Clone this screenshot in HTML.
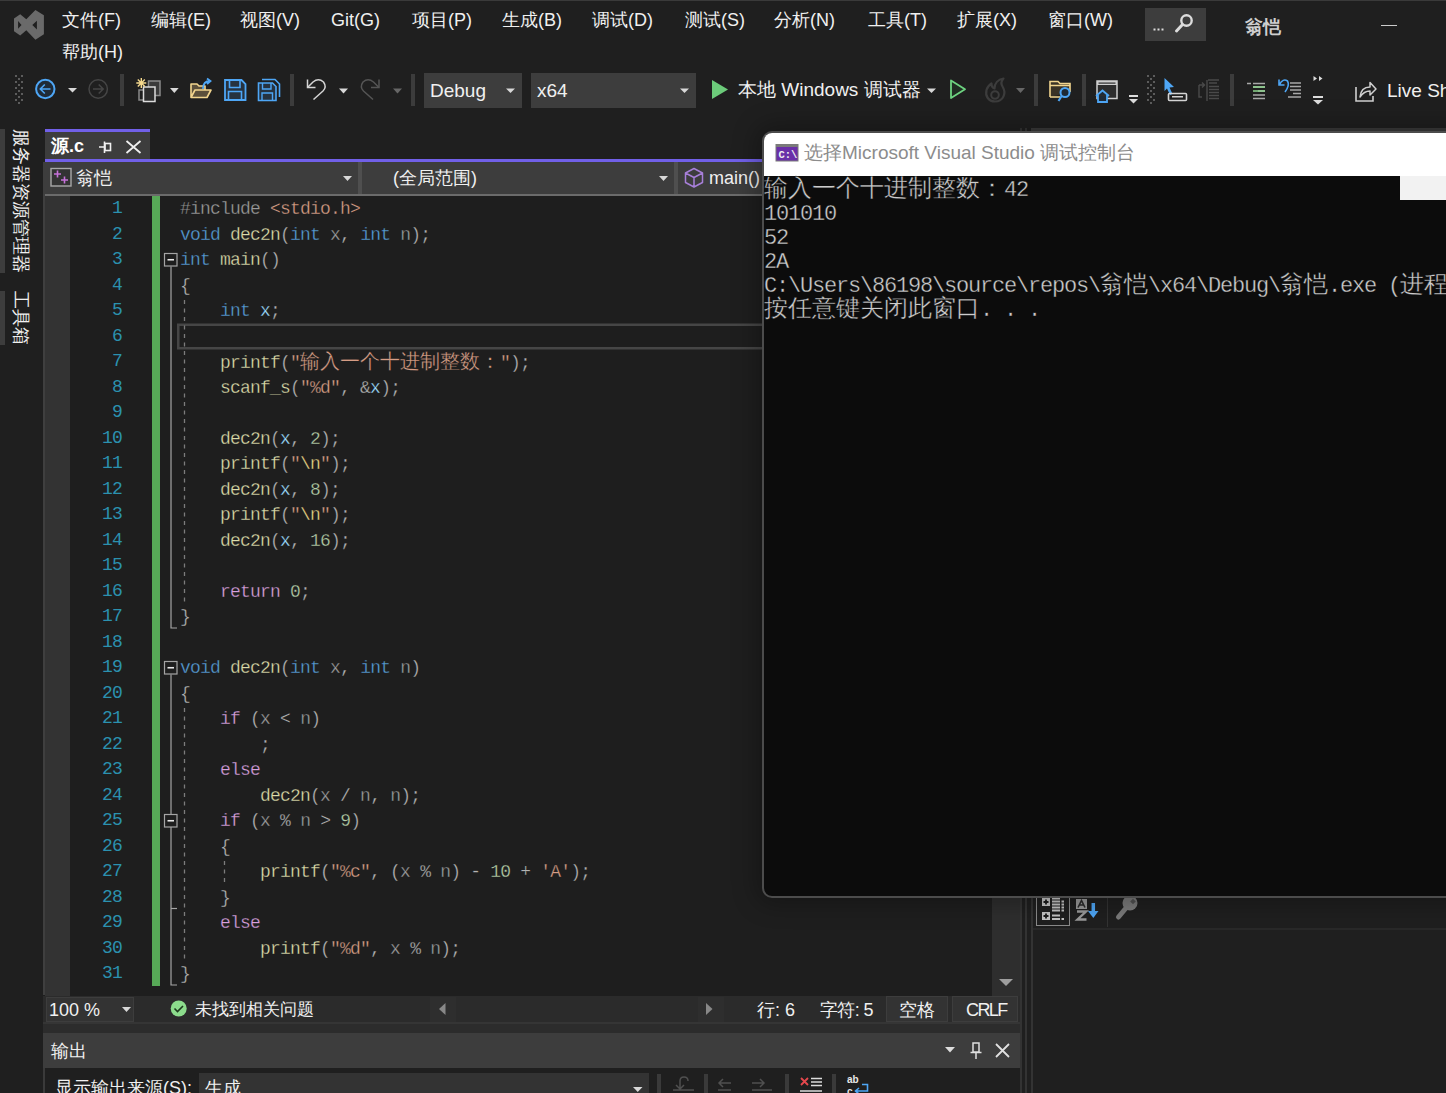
<!DOCTYPE html>
<html><head><meta charset="utf-8">
<style>
*{margin:0;padding:0;box-sizing:border-box}
html,body{width:1446px;height:1093px;overflow:hidden;background:#1f1f1f}
body{position:relative;font-family:"Liberation Sans",sans-serif;color:#f0f0f0}
.a{position:absolute}
.mi{position:absolute;top:8px;font-size:18px;line-height:24px;color:#f0f0f0;white-space:nowrap}
.tb{position:absolute;font-size:19px;line-height:24px;color:#f0f0f0;white-space:nowrap}
.sep{position:absolute;top:74px;width:4px;height:32px;background:#3c3c3c}
.code{position:absolute;left:180px;-webkit-text-stroke:0.28px #1e1e1e;font-family:"Liberation Mono",monospace;font-size:18px;letter-spacing:-0.8px;white-space:pre;color:#dcdcdc;height:25.5px;line-height:25.5px}
.ln{position:absolute;left:69px;width:53px;text-align:right;font-family:"Liberation Mono",monospace;font-size:18px;letter-spacing:-0.8px;color:#2b91af;height:25.5px;line-height:25.5px}
.k{color:#569cd6}.f{color:#dcdcaa}.p{color:#b4b4b4}.pa{color:#9a9a9a}.v{color:#9cdcfe}.s{color:#d69d85}.n{color:#b5cea8}.c{color:#d8a0df}.pp{color:#9b9b9b}.e{color:#e9d585}
.cj{font-size:20px;letter-spacing:0}
.con{position:absolute;left:764px;-webkit-text-stroke:0.35px #0c0c0c;font-size:24px;white-space:pre;color:#cccccc;line-height:24px;height:24px;overflow:visible}
.con m{font-family:"Liberation Mono",monospace;font-size:22px;letter-spacing:-1.2px;position:relative;top:0px}
</style></head><body>
<!-- top window border -->
<div class="a" style="left:0;top:0;width:1446px;height:1px;background:#3a3a3a"></div>

<!-- VS logo -->
<svg class="a" style="left:10px;top:6px" width="40" height="40" viewBox="0 0 40 40">
<path d="M4 12.6 L10.2 8.2 L16.3 13.2 L25.4 4 L33.9 9.2 L33.9 28.2 L25.4 33.8 L16.3 24.2 L10.2 29.5 L4 25.3 Z M8.1 15 L11.5 18.9 L8.1 22.7 Z M26.9 14.8 L22.3 18.9 L26.9 23.4 Z" fill="#6a6a6a" fill-rule="evenodd"/>
</svg>

<!-- menu -->
<div class="mi" style="left:62px">文件(F)</div>
<div class="mi" style="left:151px">编辑(E)</div>
<div class="mi" style="left:240px">视图(V)</div>
<div class="mi" style="left:331px">Git(G)</div>
<div class="mi" style="left:412px">项目(P)</div>
<div class="mi" style="left:502px">生成(B)</div>
<div class="mi" style="left:592px">调试(D)</div>
<div class="mi" style="left:685px">测试(S)</div>
<div class="mi" style="left:774px">分析(N)</div>
<div class="mi" style="left:868px">工具(T)</div>
<div class="mi" style="left:957px">扩展(X)</div>
<div class="mi" style="left:1048px">窗口(W)</div>
<div class="mi" style="left:62px;top:40px">帮助(H)</div>

<!-- search box -->
<div class="a" style="left:1145px;top:8px;width:61px;height:33px;background:#3d3d3d"></div>
<div class="a" style="left:1263px;top:14px;font-size:18px;font-weight:bold;color:#c8c8c8;width:1px"></div>
<div class="a" style="left:1245px;top:15px;font-size:18px;font-weight:bold;color:#cfcfcf;line-height:24px">翁恺</div>
<div class="a" style="left:1381px;top:25px;width:16px;height:1px;background:#cccccc"></div>


<!-- toolbar -->
<div class="sep" style="left:120px"></div>
<div class="sep" style="left:290px"></div>
<div class="sep" style="left:411px"></div>
<div class="sep" style="left:1034px"></div>
<div class="sep" style="left:1082px"></div>
<div class="sep" style="left:1230px"></div>
<div class="a" style="left:424px;top:73px;width:98px;height:35px;background:#3d3d3d"></div>
<div class="a" style="left:531px;top:73px;width:165px;height:35px;background:#3d3d3d"></div>
<div class="tb" style="left:430px;top:79px">Debug</div>
<div class="tb" style="left:537px;top:79px">x64</div>
<div class="tb" style="left:738px;top:78px">本地 Windows 调试器</div>
<div class="tb" style="left:1387px;top:79px">Live Share</div>
<svg class="a" style="left:0;top:0" width="1446" height="120" viewBox="0 0 1446 120">
<g fill="#5c5c5c">
<rect x="15" y="75" width="2" height="2"/><rect x="21" y="75" width="2" height="2"/><rect x="18" y="78" width="2" height="2"/>
<rect x="15" y="81" width="2" height="2"/><rect x="21" y="81" width="2" height="2"/><rect x="18" y="84" width="2" height="2"/>
<rect x="15" y="87" width="2" height="2"/><rect x="21" y="87" width="2" height="2"/><rect x="18" y="90" width="2" height="2"/>
<rect x="15" y="93" width="2" height="2"/><rect x="21" y="93" width="2" height="2"/><rect x="18" y="96" width="2" height="2"/>
<rect x="15" y="99" width="2" height="2"/><rect x="21" y="99" width="2" height="2"/><rect x="18" y="102" width="2" height="2"/>
</g>
<g fill="#5c5c5c">
<rect x="1147" y="75" width="2" height="2"/><rect x="1153" y="75" width="2" height="2"/><rect x="1150" y="78" width="2" height="2"/>
<rect x="1147" y="81" width="2" height="2"/><rect x="1153" y="81" width="2" height="2"/><rect x="1150" y="84" width="2" height="2"/>
<rect x="1147" y="87" width="2" height="2"/><rect x="1153" y="87" width="2" height="2"/><rect x="1150" y="90" width="2" height="2"/>
<rect x="1147" y="93" width="2" height="2"/><rect x="1153" y="93" width="2" height="2"/><rect x="1150" y="96" width="2" height="2"/>
<rect x="1147" y="99" width="2" height="2"/><rect x="1153" y="99" width="2" height="2"/><rect x="1150" y="102" width="2" height="2"/>
</g>
<!-- back -->
<circle cx="45.3" cy="89" r="9.2" fill="#1f2b38" stroke="#4ea6f5" stroke-width="2"/>
<path d="M40.5 89 H50.5 M44.8 84.5 L40.3 89 L44.8 93.5" fill="none" stroke="#4ea6f5" stroke-width="1.6"/>
<path d="M68 88 H77 L72.5 92.5 Z" fill="#d8d8d8"/>
<circle cx="98.2" cy="89" r="9.2" fill="none" stroke="#454545" stroke-width="1.5"/>
<path d="M93 89 H103 M98.7 84.5 L103.2 89 L98.7 93.5" fill="none" stroke="#454545" stroke-width="1.5"/>
<!-- new project -->
<rect x="148.5" y="81" width="11.5" height="14.5" fill="#3a3a3a" stroke="#8a8a8a" stroke-width="1.5"/>
<rect x="139" y="90" width="8" height="10" fill="none" stroke="#8a8a8a" stroke-width="1.5"/>
<rect x="143.5" y="87" width="11.5" height="14.5" fill="#2e2e2e" stroke="#dcdcdc" stroke-width="1.5"/>
<path d="M141.3 78 V88 M136.3 83 H146.3 M137.8 79.5 L144.8 86.5 M144.8 79.5 L137.8 86.5" stroke="#f5d98e" stroke-width="1.4"/>
<path d="M170 88 H178.7 L174.3 93 Z" fill="#d8d8d8"/>
<!-- open folder -->
<path d="M191 97.5 V84 H197 L199 86 H205 V90 M191 97.5 L195 90 H211 L207 97.5 Z" fill="#5c503b" stroke="#f2d58e" stroke-width="1.6" stroke-linejoin="round"/>
<path d="M203 89 Q203 81 210 81 M207 78.5 L210.5 81 L207 84" fill="none" stroke="#4ea6f5" stroke-width="1.8"/>
<!-- save -->
<path d="M225 80 H241.5 L245.5 84 V100 H225 Z" fill="#26323f" stroke="#4ea6f5" stroke-width="1.8"/>
<path d="M229.5 80 V87.5 H240 V80 M228.5 100 V91.5 H241.5 V100" fill="none" stroke="#4ea6f5" stroke-width="1.6"/>
<path d="M262 79.5 H275 L279.5 84 V97" fill="none" stroke="#4ea6f5" stroke-width="1.6"/>
<path d="M258.5 83 H272.5 L276 86.5 V100.5 H258.5 Z" fill="#26323f" stroke="#4ea6f5" stroke-width="1.6"/>
<path d="M262.5 83 V89 H271 V83 M262 100.5 V93 H272.5 V100.5" fill="none" stroke="#4ea6f5" stroke-width="1.4"/>
<!-- undo redo -->
<path d="M307.5 79.5 V87.5 H315.5" fill="none" stroke="#d4d4d4" stroke-width="1.5"/>
<path d="M308 87 L313 82 Q318.5 77.5 323.5 82 Q327 87 323 91 L313.5 99.5" fill="none" stroke="#d4d4d4" stroke-width="1.5"/>
<path d="M339 88.5 H348 L343.5 93.5 Z" fill="#d8d8d8"/>
<path d="M379 79.5 V87.5 H371" fill="none" stroke="#555" stroke-width="1.5"/>
<path d="M378.5 87 L373.5 82 Q368 77.5 363 82 Q359.5 87 363.5 91 L373 99.5" fill="none" stroke="#555" stroke-width="1.5"/>
<path d="M393 88.5 H402 L397.5 93.5 Z" fill="#666"/>
<!-- combos arrows -->
<path d="M506 88.5 H515 L510.5 93 Z" fill="#d8d8d8"/>
<path d="M680 88.5 H689 L684.5 93 Z" fill="#d8d8d8"/>
<!-- play -->
<path d="M712 80 L728 89.5 L712 99 Z" fill="#6ccb7a"/>
<path d="M927 88.5 H936 L931.5 93 Z" fill="#d8d8d8"/>
<path d="M951 80.5 L965 89.3 L951 98 Z" fill="#1f2d22" stroke="#6dd380" stroke-width="1.8" stroke-linejoin="round"/>
<!-- fire -->
<path d="M995 101.5 C988.5 101.5 985 96 986.5 90 C987.5 86.5 990 84.5 991.5 83.5 C991.5 86 992.5 88 994.5 88.5 C994.5 83.5 998 79.5 1003.5 78.5 C1000.5 81.5 1001 84.5 1003 87.5 C1006 92.5 1004 101.5 995 101.5 Z" fill="none" stroke="#3c3c3c" stroke-width="2.2" stroke-linejoin="round"/>
<circle cx="995" cy="95" r="3.8" fill="none" stroke="#3c3c3c" stroke-width="2"/>
<path d="M1016 88 H1025 L1020.5 93 Z" fill="#666"/>
<!-- folder search -->
<path d="M1050 97 V81.5 H1058 L1060 83.5 H1070 V92 M1050 97 H1060 M1050 85.5 H1070" fill="#3a3225" stroke="#f2d58e" stroke-width="1.6"/>
<circle cx="1065" cy="92.5" r="4.5" fill="#1e2a36" stroke="#4ea6f5" stroke-width="2"/>
<path d="M1061.8 95.8 L1058.5 101" stroke="#4ea6f5" stroke-width="2"/>
<!-- window home -->
<rect x="1097" y="81" width="20" height="17.5" fill="#2d2d2d" stroke="#cfcfcf" stroke-width="1.5"/>
<rect x="1097" y="81" width="20" height="4" fill="#cfcfcf"/>
<rect x="1098.5" y="82.5" width="17" height="1.2" fill="#2d2d2d"/>
<path d="M1096 96 L1102.5 90.5 L1109 96 M1098 95 V102 H1107 V95" fill="#1f2b38" stroke="#4ea6f5" stroke-width="1.8"/>
<rect x="1129" y="95" width="9" height="2" fill="#dcdcdc"/>
<path d="M1129 99 H1138 L1133.5 103.5 Z" fill="#dcdcdc"/>
<!-- cursor -->
<path d="M1164.5 78 L1174 87 L1169.5 87.5 L1172.5 94 L1170 95 L1167 88.5 L1164.5 91 Z" fill="#4ea6f5"/>
<rect x="1168.5" y="93.5" width="18" height="7" rx="1" fill="none" stroke="#d4d4d4" stroke-width="1.6"/>
<rect x="1172" y="96" width="11" height="1.5" fill="#d4d4d4"/>
<!-- disabled -->
<path d="M1199 85 V97 H1202 M1199 85 H1204 M1202 82.5 L1204.5 85 L1202 87.5 M1207 80 V101 M1208 80 H1219 M1209 83 H1217 M1209 86.5 H1219 M1209 89.5 H1219 M1209 92.5 H1219 M1209 95.5 H1219 M1209 98.5 H1219" fill="none" stroke="#4a4a4a" stroke-width="1.4"/>
<!-- lines green -->
<path d="M1247 83.5 H1251 M1253 83.5 H1265 M1253 87 H1265 M1253 95 H1265 M1253 98.5 H1265 M1258 91 H1265" fill="none" stroke="#a8a8a8" stroke-width="1.4"/>
<path d="M1253 87 H1265 M1253 91 H1265" stroke="#8fd58f" stroke-width="1.4"/>
<!-- undo list -->
<path d="M1290 83 H1301 M1290 86.5 H1301 M1290 90 H1301 M1293 93.5 H1301 M1288 97 H1301" fill="none" stroke="#a8a8a8" stroke-width="1.4"/>
<path d="M1279 79.5 V85 H1284.5 M1279.5 84.5 Q1283 78 1287.5 81 Q1290 85 1285 92" fill="none" stroke="#4ea6f5" stroke-width="1.6"/>
<!-- overflow -->
<path d="M1313.5 76 L1317 78.5 L1313.5 81 Z M1319 76 L1322.5 78.5 L1319 81 Z" fill="#dcdcdc"/>
<rect x="1313" y="96" width="10" height="2" fill="#dcdcdc"/>
<path d="M1313 100 H1323 L1318 104.5 Z" fill="#dcdcdc"/>
<!-- live share -->
<path d="M1356 87 V101 H1373 V96" fill="none" stroke="#cfcfcf" stroke-width="1.6"/>
<path d="M1360 97 Q1361 87 1370 87 V82.5 L1376 89 L1370 95 V91 Q1364 91 1360 97 Z" fill="none" stroke="#cfcfcf" stroke-width="1.5" stroke-linejoin="round"/>
<!-- search magnifier -->
<circle cx="1186.5" cy="20.5" r="5.2" fill="none" stroke="#dcdcdc" stroke-width="2.4"/>
<path d="M1182.5 24.5 L1176.5 31" stroke="#dcdcdc" stroke-width="3" stroke-linecap="round"/>
<rect x="1153.5" y="28.5" width="2" height="2" fill="#dcdcdc"/><rect x="1157.5" y="28.5" width="2" height="2" fill="#dcdcdc"/><rect x="1161.5" y="28.5" width="2" height="2" fill="#dcdcdc"/>
</svg>

<!-- left sidebar -->
<div class="a" style="left:0;top:129px;width:5px;height:144px;background:#3d3d3d"></div>
<div class="a" style="left:0;top:291px;width:5px;height:54px;background:#3d3d3d"></div>
<div class="a" style="left:31px;top:129px;font-size:18px;line-height:20px;color:#f0f0f0;transform-origin:0 0;transform:rotate(90deg);white-space:nowrap;letter-spacing:0">服务器资源管理器</div>
<div class="a" style="left:31px;top:291px;font-size:18px;line-height:20px;color:#f0f0f0;transform-origin:0 0;transform:rotate(90deg);white-space:nowrap;letter-spacing:0">工具箱</div>

<!-- tab -->
<div class="a" style="left:45px;top:129px;width:105px;height:3px;background:#7160e8"></div>
<div class="a" style="left:45px;top:132px;width:105px;height:27px;background:#3d3d3d"></div>
<div class="a" style="left:51px;top:134px;font-size:18px;font-weight:bold;line-height:24px;color:#ffffff">源.c</div>
<svg class="a" style="left:95px;top:136px" width="50" height="22" viewBox="95 136 50 22">
<path d="M99 147 H104.5 M104.5 141.5 V153" stroke="#f0f0f0" stroke-width="1.6" fill="none"/>
<rect x="105" y="143.5" width="5.5" height="7" fill="none" stroke="#f0f0f0" stroke-width="1.6"/>
<path d="M126.5 141 L140.5 153 M140.5 141 L126.5 153" stroke="#f0f0f0" stroke-width="1.8"/>
</svg>
<div class="a" style="left:45px;top:159px;width:975px;height:3px;background:#7160e8"></div>

<!-- nav bar -->
<div class="a" style="left:43px;top:162px;width:977px;height:32px;background:#3d3d3d"></div>
<div class="a" style="left:358px;top:162px;width:4px;height:32px;background:#4f4f4f"></div>
<div class="a" style="left:674px;top:162px;width:4px;height:32px;background:#4f4f4f"></div>
<div class="a" style="left:45px;top:194px;width:975px;height:2px;background:#6b6b6b"></div>
<div class="a" style="left:76px;top:166px;font-size:18px;line-height:24px;color:#f0f0f0">翁恺</div>
<div class="a" style="left:393px;top:166px;font-size:18px;line-height:24px;color:#f0f0f0">(全局范围)</div>
<div class="a" style="left:709px;top:166px;font-size:18px;line-height:24px;color:#f0f0f0">main()</div>
<svg class="a" style="left:40px;top:162px" width="730" height="34" viewBox="40 162 730 34">
<rect x="51" y="168.5" width="20" height="17.5" fill="#333" stroke="#a8a8a8" stroke-width="1.4"/>
<path d="M54 174 H61 M57.5 170.5 V177.5 M61 180 H68 M64.5 176.5 V183.5" stroke="#c671d9" stroke-width="1.6"/>
<path d="M343 176 H352 L347.5 181 Z" fill="#d8d8d8"/>
<path d="M659 176 H668 L663.5 181 Z" fill="#d8d8d8"/>
<path d="M694 168.5 L702.5 173 V182.5 L694 187 L685.5 182.5 V173 Z M685.5 173 L694 177.5 L702.5 173 M694 177.5 V187" fill="none" stroke="#a77fd9" stroke-width="1.5" stroke-linejoin="round"/>
</svg>

<!-- editor -->
<div class="a" style="left:43px;top:196px;width:949px;height:800px;background:#1e1e1e"></div>
<div class="a" style="left:43px;top:194px;width:2px;height:801px;background:#3f3f3f"></div>
<div class="a" style="left:45px;top:196px;width:25px;height:800px;background:#333333"></div>
<div class="a" style="left:152px;top:196px;width:8px;height:790px;background:#57a957"></div>
<!-- CODE START -->
<svg class="a" style="left:0;top:0" width="763" height="995" viewBox="0 0 763 995">
<rect x="178.25" y="324.75" width="600" height="23.5" fill="none" stroke="#464646" stroke-width="2.5"/>
<path d="M184.5 300.0 V604.0" stroke="#7c7c7c" stroke-width="1.3" stroke-dasharray="4 4.5"/>
<path d="M184.5 708.0 V961.0" stroke="#7c7c7c" stroke-width="1.3" stroke-dasharray="4 4.5"/>
<path d="M224.5 861.0 V884.5" stroke="#7c7c7c" stroke-width="1.3" stroke-dasharray="4 4.5"/>
<path d="M171 266.5 V628.0 H177" fill="none" stroke="#a5a5a5" stroke-width="1.2"/>
<path d="M171 674.5 V985.0 H177" fill="none" stroke="#a5a5a5" stroke-width="1.2"/>
<path d="M171 908.5 H177" fill="none" stroke="#a5a5a5" stroke-width="1.2"/>
<rect x="164.5" y="253.5" width="12.5" height="12.5" fill="#1e1e1e" stroke="#a5a5a5" stroke-width="1.2"/>
<path d="M167.5 259.75 H174" stroke="#e8e8e8" stroke-width="1.6"/>
<rect x="164.5" y="661.5" width="12.5" height="12.5" fill="#1e1e1e" stroke="#a5a5a5" stroke-width="1.2"/>
<path d="M167.5 667.75 H174" stroke="#e8e8e8" stroke-width="1.6"/>
<rect x="164.5" y="814.5" width="12.5" height="12.5" fill="#1e1e1e" stroke="#a5a5a5" stroke-width="1.2"/>
<path d="M167.5 820.75 H174" stroke="#e8e8e8" stroke-width="1.6"/>
</svg>
<div class="ln" style="top:196.0px">1</div>
<div class="code" style="top:197.0px"><span class="pp">#include</span> <span class="s">&lt;stdio.h&gt;</span></div>
<div class="ln" style="top:221.5px">2</div>
<div class="code" style="top:222.5px"><span class="k">void</span> <span class="f">dec2n</span><span class="p">(</span><span class="k">int</span> <span class="pa">x</span><span class="p">,</span> <span class="k">int</span> <span class="pa">n</span><span class="p">);</span></div>
<div class="ln" style="top:247.0px">3</div>
<div class="code" style="top:248.0px"><span class="k">int</span> <span class="f">main</span><span class="p">()</span></div>
<div class="ln" style="top:272.5px">4</div>
<div class="code" style="top:273.5px"><span class="p">{</span></div>
<div class="ln" style="top:298.0px">5</div>
<div class="code" style="top:299.0px">    <span class="k">int</span> <span class="v">x</span><span class="p">;</span></div>
<div class="ln" style="top:323.5px">6</div>
<div class="ln" style="top:349.0px">7</div>
<div class="code" style="top:350.0px">    <span class="f">printf</span><span class="p">(</span><span class="s">"</span><span class="s cj">输入一个十进制整数：</span><span class="s">"</span><span class="p">);</span></div>
<div class="ln" style="top:374.5px">8</div>
<div class="code" style="top:375.5px">    <span class="f">scanf_s</span><span class="p">(</span><span class="s">"%d"</span><span class="p">,</span> <span class="p">&amp;</span><span class="v">x</span><span class="p">);</span></div>
<div class="ln" style="top:400.0px">9</div>
<div class="ln" style="top:425.5px">10</div>
<div class="code" style="top:426.5px">    <span class="f">dec2n</span><span class="p">(</span><span class="v">x</span><span class="p">,</span> <span class="n">2</span><span class="p">);</span></div>
<div class="ln" style="top:451.0px">11</div>
<div class="code" style="top:452.0px">    <span class="f">printf</span><span class="p">(</span><span class="s">"</span><span class="e">\n</span><span class="s">"</span><span class="p">);</span></div>
<div class="ln" style="top:476.5px">12</div>
<div class="code" style="top:477.5px">    <span class="f">dec2n</span><span class="p">(</span><span class="v">x</span><span class="p">,</span> <span class="n">8</span><span class="p">);</span></div>
<div class="ln" style="top:502.0px">13</div>
<div class="code" style="top:503.0px">    <span class="f">printf</span><span class="p">(</span><span class="s">"</span><span class="e">\n</span><span class="s">"</span><span class="p">);</span></div>
<div class="ln" style="top:527.5px">14</div>
<div class="code" style="top:528.5px">    <span class="f">dec2n</span><span class="p">(</span><span class="v">x</span><span class="p">,</span> <span class="n">16</span><span class="p">);</span></div>
<div class="ln" style="top:553.0px">15</div>
<div class="ln" style="top:578.5px">16</div>
<div class="code" style="top:579.5px">    <span class="c">return</span> <span class="n">0</span><span class="p">;</span></div>
<div class="ln" style="top:604.0px">17</div>
<div class="code" style="top:605.0px"><span class="p">}</span></div>
<div class="ln" style="top:629.5px">18</div>
<div class="ln" style="top:655.0px">19</div>
<div class="code" style="top:656.0px"><span class="k">void</span> <span class="f">dec2n</span><span class="p">(</span><span class="k">int</span> <span class="pa">x</span><span class="p">,</span> <span class="k">int</span> <span class="pa">n</span><span class="p">)</span></div>
<div class="ln" style="top:680.5px">20</div>
<div class="code" style="top:681.5px"><span class="p">{</span></div>
<div class="ln" style="top:706.0px">21</div>
<div class="code" style="top:707.0px">    <span class="c">if</span> <span class="p">(</span><span class="pa">x</span> <span class="p">&lt;</span> <span class="pa">n</span><span class="p">)</span></div>
<div class="ln" style="top:731.5px">22</div>
<div class="code" style="top:732.5px">        <span class="p">;</span></div>
<div class="ln" style="top:757.0px">23</div>
<div class="code" style="top:758.0px">    <span class="c">else</span></div>
<div class="ln" style="top:782.5px">24</div>
<div class="code" style="top:783.5px">        <span class="f">dec2n</span><span class="p">(</span><span class="pa">x</span> <span class="p">/</span> <span class="pa">n</span><span class="p">,</span> <span class="pa">n</span><span class="p">);</span></div>
<div class="ln" style="top:808.0px">25</div>
<div class="code" style="top:809.0px">    <span class="c">if</span> <span class="p">(</span><span class="pa">x</span> <span class="p">%</span> <span class="pa">n</span> <span class="p">&gt;</span> <span class="n">9</span><span class="p">)</span></div>
<div class="ln" style="top:833.5px">26</div>
<div class="code" style="top:834.5px">    <span class="p">{</span></div>
<div class="ln" style="top:859.0px">27</div>
<div class="code" style="top:860.0px">        <span class="f">printf</span><span class="p">(</span><span class="s">"%c"</span><span class="p">,</span> <span class="p">(</span><span class="pa">x</span> <span class="p">%</span> <span class="pa">n</span><span class="p">)</span> <span class="p">-</span> <span class="n">10</span> <span class="p">+</span> <span class="s">'A'</span><span class="p">);</span></div>
<div class="ln" style="top:884.5px">28</div>
<div class="code" style="top:885.5px">    <span class="p">}</span></div>
<div class="ln" style="top:910.0px">29</div>
<div class="code" style="top:911.0px">    <span class="c">else</span></div>
<div class="ln" style="top:935.5px">30</div>
<div class="code" style="top:936.5px">        <span class="f">printf</span><span class="p">(</span><span class="s">"%d"</span><span class="p">,</span> <span class="pa">x</span> <span class="p">%</span> <span class="pa">n</span><span class="p">);</span></div>
<div class="ln" style="top:961.0px">31</div>
<div class="code" style="top:962.0px"><span class="p">}</span></div>
<!-- CODE END -->
<!-- scrollbar -->
<div class="a" style="left:992px;top:196px;width:28px;height:800px;background:#2e2e2e"></div>
<svg class="a" style="left:990px;top:970px" width="30" height="25" viewBox="990 970 30 25"><path d="M999 979 H1013 L1006 986 Z" fill="#9e9e9e"/></svg>
<!-- right dividers -->
<div class="a" style="left:1020px;top:128px;width:13px;height:965px;background:#1f1f1f"></div>
<div class="a" style="left:1020px;top:128px;width:2px;height:965px;background:#333"></div>
<div class="a" style="left:1025px;top:128px;width:2px;height:965px;background:#333"></div>
<div class="a" style="left:1031px;top:128px;width:2px;height:965px;background:#333"></div>
<div class="a" style="left:1031px;top:128px;width:415px;height:4px;background:#3a3a3a"></div>

<!-- status bar -->
<div class="a" style="left:43px;top:996px;width:977px;height:26px;background:#2b2b2b"></div>
<div class="a" style="left:43px;top:1022px;width:977px;height:2px;background:#353535"></div>
<div class="a" style="left:46px;top:997px;width:88px;height:25px;background:#333333;border:1px solid #3d3d3d"></div>
<div class="a" style="left:49px;top:998px;font-size:18px;line-height:24px;color:#f0f0f0">100 %</div>
<div class="a" style="left:195px;top:998px;font-size:17px;line-height:24px;color:#f0f0f0">未找到相关问题</div>
<div class="a" style="left:430px;top:997px;width:26px;height:25px;background:#2e2e2e"></div>
<div class="a" style="left:698px;top:997px;width:26px;height:25px;background:#2e2e2e"></div>
<div class="a" style="left:757px;top:998px;font-size:18px;line-height:24px;color:#f0f0f0">行: 6</div>
<div class="a" style="left:820px;top:998px;font-size:18px;line-height:24px;color:#f0f0f0;letter-spacing:-0.6px">字符: 5</div>
<div class="a" style="left:886px;top:996px;width:62px;height:26px;background:#333333;border:1px solid #3d3d3d"></div>
<div class="a" style="left:952px;top:996px;width:66px;height:26px;background:#333333;border:1px solid #3d3d3d"></div>
<div class="a" style="left:899px;top:998px;font-size:18px;line-height:24px;color:#f0f0f0">空格</div>
<div class="a" style="left:966px;top:998px;font-size:18px;line-height:24px;color:#f0f0f0;letter-spacing:-1.6px">CRLF</div>
<svg class="a" style="left:100px;top:995px" width="650" height="29" viewBox="100 995 650 29">
<path d="M122 1007 H131 L126.5 1012 Z" fill="#d8d8d8"/>
<circle cx="178.7" cy="1008.5" r="8" fill="#8cdc8c"/>
<path d="M174.5 1008.5 L177.5 1011.5 L183 1006" fill="none" stroke="#1d3a1d" stroke-width="1.6"/>
<path d="M445.5 1003 V1015 L439 1009 Z" fill="#888"/>
<path d="M706 1003 V1015 L712.5 1009 Z" fill="#888"/>
</svg>

<!-- output panel -->
<div class="a" style="left:43px;top:1024px;width:977px;height:9px;background:#2c2c2c"></div>
<div class="a" style="left:43px;top:1033px;width:977px;height:35px;background:#3d3d3d"></div>
<div class="a" style="left:51px;top:1039px;font-size:18px;line-height:24px;color:#f0f0f0">输出</div>
<svg class="a" style="left:940px;top:1035px" width="80" height="32" viewBox="940 1035 80 32">
<path d="M945 1047 H955 L950 1052.5 Z" fill="#dcdcdc"/>
<path d="M973 1043 H979 V1052 H973 Z M970.5 1052.5 H981.5 M976 1052.5 V1059" fill="none" stroke="#e0e0e0" stroke-width="1.5"/>
<path d="M996 1044 L1009 1057 M1009 1044 L996 1057" stroke="#e0e0e0" stroke-width="1.8"/>
</svg>
<div class="a" style="left:43px;top:1068px;width:977px;height:25px;background:#1f1f1f;border-left:2px solid #3a3a3a"></div>
<div class="a" style="left:55px;top:1076px;font-size:18px;line-height:24px;color:#f0f0f0">显示输出来源(S):</div>
<div class="a" style="left:199px;top:1073px;width:450px;height:20px;background:#333333"></div>
<div class="a" style="left:205px;top:1076px;font-size:18px;line-height:24px;color:#f0f0f0">生成</div>
<svg class="a" style="left:620px;top:1068px" width="260" height="25" viewBox="620 1068 260 25">
<path d="M633 1087 H642.5 L637.75 1092 Z" fill="#d8d8d8"/>
<rect x="657" y="1074" width="4" height="19" fill="#3a3a3a"/>
<rect x="704" y="1074" width="4" height="19" fill="#3a3a3a"/>
<rect x="785" y="1074" width="4" height="19" fill="#3a3a3a"/>
<rect x="832" y="1074" width="4" height="19" fill="#3a3a3a"/>
<path d="M680 1088 V1081 Q680 1077 684 1077 Q688 1077 688 1081 M676 1085 L680 1089 L684 1085 M673 1090 H694" fill="none" stroke="#505050" stroke-width="1.5"/>
<path d="M719 1083 H731 M723 1079 L719 1083 L723 1087 M718 1090 H731" fill="none" stroke="#505050" stroke-width="1.5"/>
<path d="M752 1083 H764 M760 1079 L764 1083 L760 1087 M752 1090 H772" fill="none" stroke="#505050" stroke-width="1.5"/>
<path d="M801 1078 L808 1085 M808 1078 L801 1085" stroke="#e5484d" stroke-width="1.8"/>
<path d="M811 1078.5 H822 M811 1082 H822 M811 1085.5 H822 M800 1091 H822" stroke="#dcdcdc" stroke-width="1.4"/>
<text x="847" y="1083" font-family="Liberation Sans" font-size="10" font-weight="bold" fill="#e8e8e8">ab</text>
<text x="847" y="1095" font-family="Liberation Sans" font-size="10" font-weight="bold" fill="#e8e8e8">c</text>
<path d="M862 1084.5 H867.5 V1091 H856 M859 1088 L855.5 1091 L859 1094" fill="none" stroke="#4ea6f5" stroke-width="1.6"/>
</svg>

<!-- right panel -->
<div class="a" style="left:1033px;top:897px;width:413px;height:196px;background:#1f1f1f"></div>

<!-- properties toolbar -->
<svg class="a" style="left:1033px;top:880px" width="413" height="60" viewBox="1033 880 413 60">
<rect x="1036.5" y="890" width="33" height="35.5" fill="none" stroke="#8a8a8a" stroke-width="1"/>
<g fill="#c4c4c4">
<rect x="1042" y="898" width="8" height="8"/><rect x="1042" y="912" width="8" height="8"/>
<rect x="1052" y="897.5" width="8" height="2"/><rect x="1052" y="900.5" width="8" height="2"/><rect x="1052" y="903.5" width="8" height="2"/><rect x="1052" y="906.5" width="8" height="2"/><rect x="1052" y="909.5" width="8" height="2"/>
<rect x="1061.5" y="900.5" width="2.5" height="2"/><rect x="1061.5" y="903.5" width="2.5" height="2"/><rect x="1061.5" y="906.5" width="2.5" height="2"/><rect x="1061.5" y="909.5" width="2.5" height="2"/>
<rect x="1052" y="914.5" width="8" height="2"/><rect x="1052" y="918" width="8" height="2"/><rect x="1061.5" y="918" width="2.5" height="2"/>
</g>
<path d="M1043.5 902 H1048.5 M1046 899.5 V904.5 M1043.5 916 H1048.5 M1046 913.5 V918.5" stroke="#1a1a1a" stroke-width="1.8"/>
<rect x="1076" y="899" width="11" height="10" fill="#9a9a9a"/>
<path d="M1078 907.5 L1081.5 900.5 L1085 907.5 M1079.2 905 H1083.8" fill="none" stroke="#2a2a2a" stroke-width="1.6"/>
<path d="M1077 911.5 H1086 L1077.5 919.5 H1086.5" fill="none" stroke="#9a9a9a" stroke-width="2.4"/>
<path d="M1093.3 903 V913" stroke="#4ea6f5" stroke-width="3.5"/>
<path d="M1088 911 H1098.5 L1093.3 918 Z" fill="#4ea6f5"/>
<path d="M1107.5 897 V927" stroke="#333" stroke-width="1"/>
<circle cx="1130" cy="903" r="7.5" fill="#7a7a7a"/>
<rect x="1131" y="899.5" width="4" height="4" fill="#505050" transform="rotate(45 1133 901.5)"/>
<path d="M1126 908 L1118.5 917" stroke="#7a7a7a" stroke-width="5" stroke-linecap="round"/>
<path d="M1033 929 H1446" stroke="#2e2e2e" stroke-width="1.5"/>
</svg>

<!-- console window -->
<div class="a" style="left:762px;top:131px;width:700px;height:767px;border:2px solid #4c4c4c;border-radius:10px 0 0 10px;background:#0c0c0c;box-shadow:0 0 24px 6px rgba(0,0,0,0.28);overflow:hidden">
  <div class="a" style="left:0;top:0;width:700px;height:43px;background:#ffffff"></div>
</div>
<svg class="a" style="left:770px;top:140px" width="34" height="26" viewBox="770 140 34 26">
<rect x="775.5" y="144" width="23" height="17.5" fill="#7a7a7a"/>
<rect x="776.5" y="147" width="21" height="13.5" fill="#6a2fa8"/>
<text x="778.5" y="158" font-family="Liberation Mono" font-size="10.5" font-weight="bold" fill="#f0f0f0">C:\</text>
</svg>
<div class="a" style="left:804px;top:141px;font-size:19px;line-height:24px;color:#8c8c8c;white-space:nowrap">选择Microsoft Visual Studio 调试控制台</div>
<div class="a" style="left:1400px;top:176px;width:46px;height:24px;background:#f2f2f2"></div>
<div class="con" style="top:176px">输入一个十进制整数：<m>42</m></div>
<div class="con" style="top:200px"><m>101010</m></div>
<div class="con" style="top:224px"><m>52</m></div>
<div class="con" style="top:248px"><m>2A</m></div>
<div class="con" style="top:272px"><m>C:\Users\86198\source\repos\</m>翁恺<m>\x64\Debug\</m>翁恺<m>.exe (</m>进程</div>
<div class="con" style="top:296px">按任意键关闭此窗口<m>. . .</m></div>
</body></html>
